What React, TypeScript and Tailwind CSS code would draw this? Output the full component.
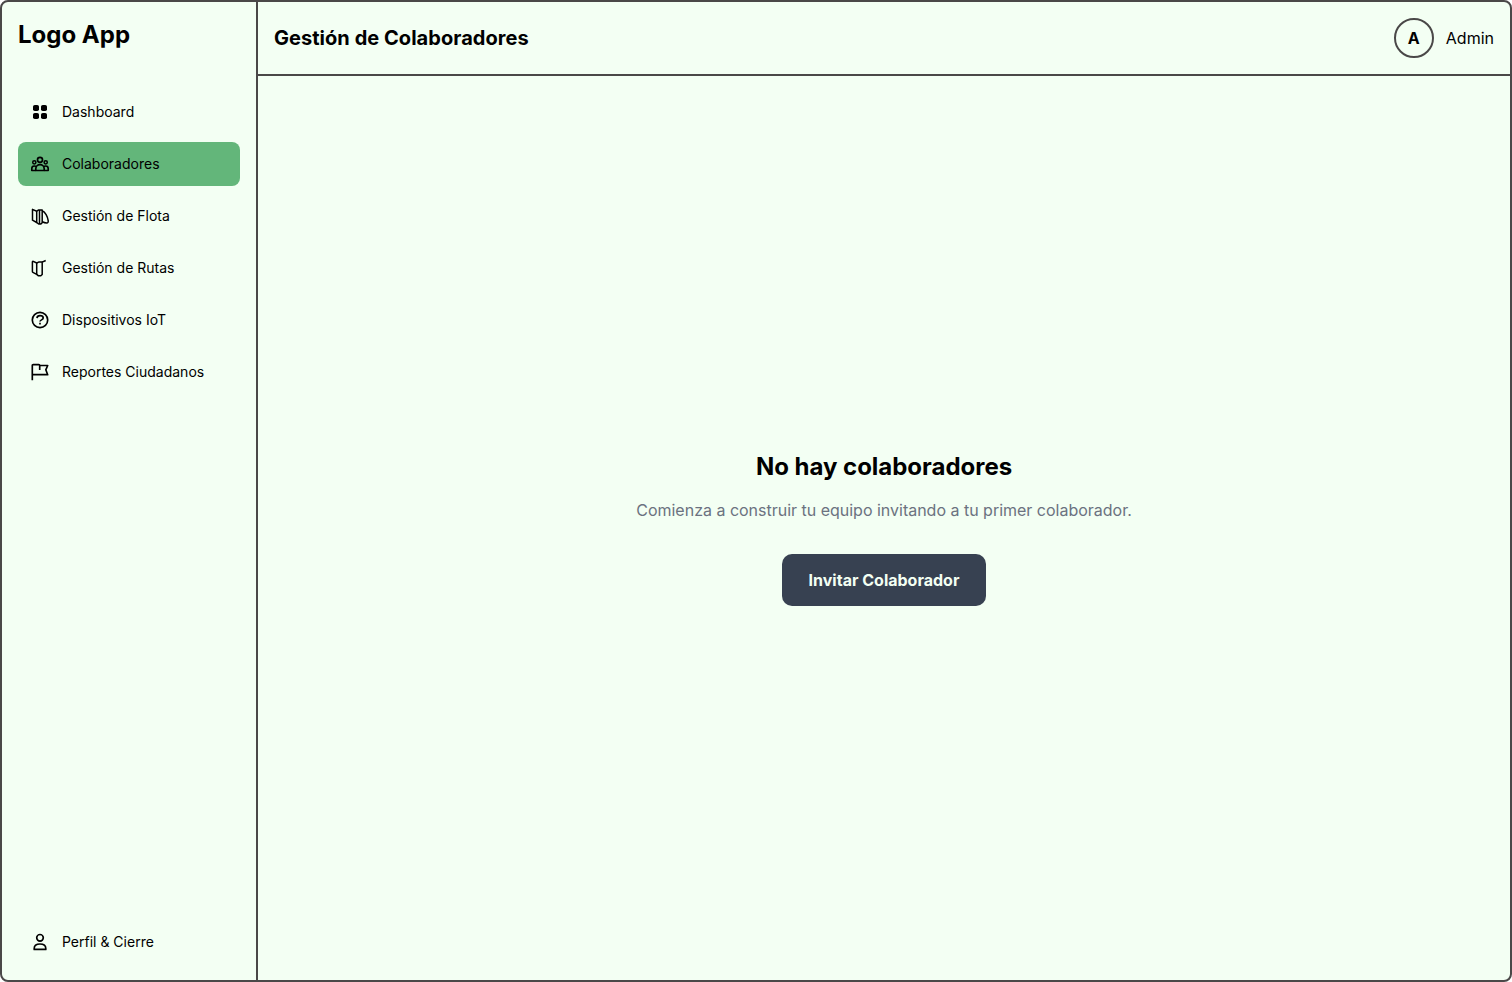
import type { ReactNode } from "react";

function Icon({ children }: { children: ReactNode }) {
  return (
    <svg
      viewBox="0 0 20 20"
      className="size-5 shrink-0"
      fill="none"
      stroke="currentColor"
      strokeWidth="1.67"
      strokeLinejoin="round"
    >
      {children}
    </svg>
  );
}

const icons = {
  dashboard: (
    <Icon>
      <g fill="currentColor" stroke="none">
        <rect x="3" y="3" width="6" height="6" rx="1.8" />
        <rect x="11" y="3" width="6" height="6" rx="1.8" />
        <rect x="3" y="11" width="6" height="6" rx="1.8" />
        <rect x="11" y="11" width="6" height="6" rx="1.8" />
      </g>
    </Icon>
  ),
  team: (
    <Icon>
      <circle cx="10" cy="5.8" r="2.5" />
      <circle cx="4.3" cy="8.3" r="1.6" strokeWidth="1.5" />
      <circle cx="15.7" cy="8.3" r="1.6" strokeWidth="1.5" />
      <path d="M5.8 16.5v-1.7a4.2 4.2 0 0 1 8.4 0v1.7z" />
      <path d="M5.8 16.5H1.8v-2c0-1.6 1.1-2.5 2.5-2.5.8 0 1.5.2 2 .7M14.2 16.5h4v-2c0-1.6-1.1-2.5-2.5-2.5-.8 0-1.5.2-2 .7" />
    </Icon>
  ),
  fleet: (
    <Icon>
      <g strokeWidth="1.5">
        <path d="M2.5 3.4v10.8l4.2 2.3V5.2z" />
        <path d="M6.7 5.2l2-1.3h3.5v12.8l-1.3 1.3H8.6l-1.9-1.5M9.5 4v13.9" />
        <path d="M12.2 4.8c3 .9 5.5 5.8 6 9.9.2 1.5-.3 2.2-1.5 2.2-1.6 0-3-.4-4.5-1.1" />
      </g>
    </Icon>
  ),
  routes: (
    <Icon>
      <g strokeWidth="1.5">
        <path d="M3.3 3.4c-.5-.2-.9 0-.9.5v9.6c0 .4.2.7.5.8l3.8 2V5z" />
        <path d="M6.7 5l1.9-.9h3.6v12.4l-1.4 1.3H8.5l-1.8-1.5M12.2 4.2l3.5-1.7" />
      </g>
    </Icon>
  ),
  help: (
    <Icon>
      <circle cx="10" cy="10" r="7.7" />
      <path d="M7 8.1c.1-1.6 1.3-2.5 3-2.5 1.8 0 3.2.9 3.2 2.3 0 2-3.2 1.9-3.2 3.7" />
      <path d="M10 12.8v1.7" />
    </Icon>
  ),
  flag: (
    <Icon>
      <path d="M2.3 18.2V3.5c0-.6.3-.9.9-.9h5.6c.6 0 .9.3.9.9h8l-1.9 4.3 1.9 4.9H2.3M9.7 3.5V7.9" />
    </Icon>
  ),
  user: (
    <Icon>
      <circle cx="10" cy="5.8" r="3.3" />
      <path d="M4.2 17.4v-1c0-2.7 2.3-4.4 5.8-4.4s5.8 1.7 5.8 4.4v1z" />
    </Icon>
  ),
};

function NavItem({ icon, label, active = false }: { icon: ReactNode; label: string; active?: boolean }) {
  return (
    <a
      className={
        active
          ? "flex h-11 items-center gap-3 rounded-lg bg-[#63b67a] px-3 text-sm"
          : "flex h-11 items-center gap-3 rounded-lg px-3 text-sm"
      }
    >
      {icon}
      <span>{label}</span>
    </a>
  );
}

export default function App() {
  return (
    <div className="h-screen bg-white font-['Inter',sans-serif] text-black">
      <div className="flex h-full overflow-hidden rounded-lg border-2 border-[#4a4848] bg-[#f3fff3]">
        <aside className="flex w-64 shrink-0 flex-col border-r-2 border-[#4a4848] p-4">
          <h1 className="pt-px text-2xl font-bold">Logo App</h1>
          <nav className="mt-[39px] flex flex-1 flex-col gap-2">
            <NavItem icon={icons.dashboard} label="Dashboard" />
            <NavItem icon={icons.team} label="Colaboradores" active />
            <NavItem icon={icons.fleet} label="Gestión de Flota" />
            <NavItem icon={icons.routes} label="Gestión de Rutas" />
            <NavItem icon={icons.help} label="Dispositivos IoT" />
            <NavItem icon={icons.flag} label="Reportes Ciudadanos" />
          </nav>
          <NavItem icon={icons.user} label="Perfil & Cierre" />
        </aside>
        <div className="flex flex-1 flex-col">
          <header className="flex items-center justify-between border-b-2 border-[#4a4848] p-4">
            <h2 className="text-xl font-bold tracking-[0.04px]">Gestión de Colaboradores</h2>
            <div className="flex items-center gap-3">
              <span className="flex size-10 items-center justify-center rounded-full border-2 border-[#4a4848] font-bold">
                A
              </span>
              <span>Admin</span>
            </div>
          </header>
          <main className="flex flex-1 flex-col items-center justify-center">
            <h3 className="pt-px text-2xl font-bold tracking-[-0.02px]">No hay colaboradores</h3>
            <p className="mt-[15px] tracking-[-0.01px] text-[#6b7280]">
              Comienza a construir tu equipo invitando a tu primer colaborador.
            </p>
            <button className="mt-8 h-13 w-51 rounded-[10px] bg-[#374151] font-bold text-[#f3fff3]">
              Invitar Colaborador
            </button>
          </main>
        </div>
      </div>
    </div>
  );
}
